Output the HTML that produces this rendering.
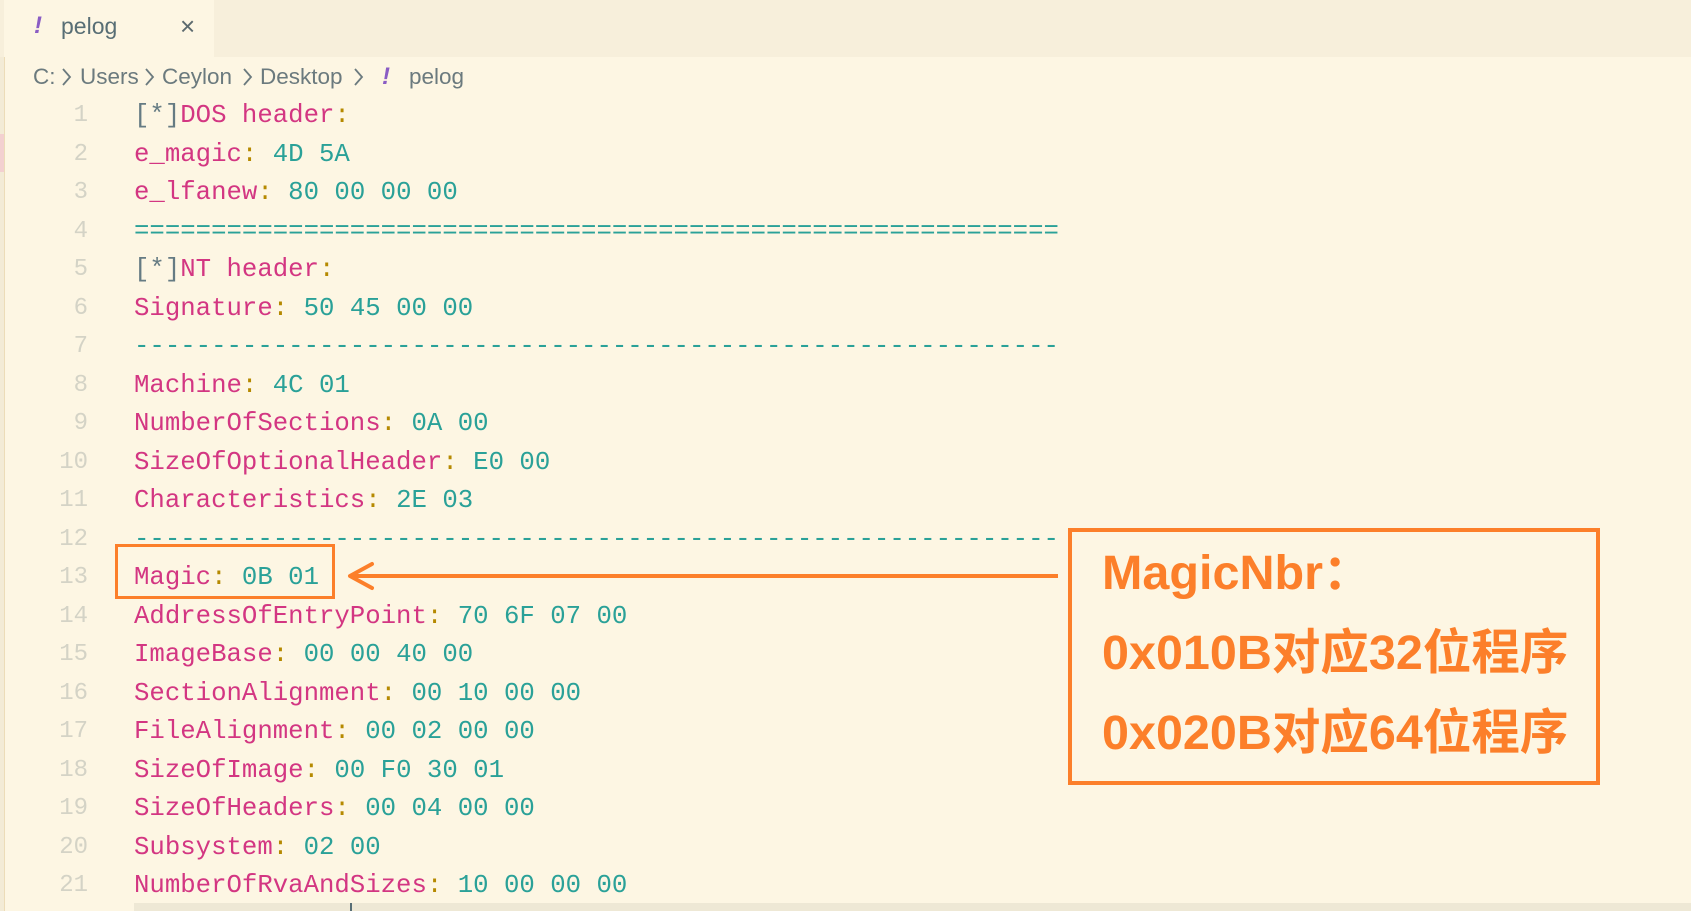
<!DOCTYPE html>
<html><head><meta charset="utf-8"><style>
*{margin:0;padding:0;box-sizing:border-box}
body{width:1691px;height:911px;background:#fdf6e3;position:relative;overflow:hidden;font-family:"Liberation Sans","Noto Sans CJK SC",sans-serif}
.tabbar{position:absolute;left:0;top:0;width:1691px;height:57px;background:#f7efdb}
.tab{position:absolute;left:4px;top:0;width:210px;height:57px;background:#fdf6e3}
.ex{position:absolute;color:#8a5cc4;font-style:italic;font-weight:bold;font-size:24px}
.sb{position:absolute;left:0;top:57px;width:5px;height:854px;border-right:1px solid #ecdcb8;background:#f3ebd6}
.t{position:absolute;color:#586e75;font-size:23px}
.bc{position:absolute;top:64px;color:#6b7a7e;font-size:22.5px;white-space:pre}
.ln{position:absolute;left:30px;width:58px;text-align:right;color:#d4d3c6;font-family:"Liberation Mono",monospace;font-size:24px}
.code{position:absolute;left:134px;font-family:"Liberation Mono",monospace;font-size:25.7px;white-space:pre;color:#d33682}
.c{color:#b58900}.v{color:#2aa198}.g{color:#657b83}
.note{position:absolute;left:1102px;color:#fc7f2a;font-weight:bold;font-size:48.5px;font-family:"Liberation Sans","Noto Sans CJK SC",sans-serif;white-space:nowrap}
</style></head><body>
<div class="tabbar"></div>
<div class="tab"></div>
<div class="ex" style="left:34px;top:12px">!</div>
<div class="t" style="left:61px;top:13px">pelog</div>
<div class="t" style="left:180px;top:11px;font-size:26px;color:#5c6a6e">×</div>
<div class="sb"></div>
<div style="position:absolute;left:0;top:134px;width:4px;height:38px;background:#f3d0d0"></div>
<div class="bc" style="left:33px">C:</div>
<div class="bc" style="left:80px">Users</div>
<div class="bc" style="left:162px">Ceylon</div>
<div class="bc" style="left:260px">Desktop</div>
<svg style="position:absolute;left:0;top:0" width="400" height="100">
<g fill="none" stroke="#6b7a7e" stroke-width="1.8">
<polyline points="63,69 70,77 63,85"/><polyline points="146,69 153,77 146,85"/><polyline points="244,69 251,77 244,85"/><polyline points="355,69 362,77 355,85"/>
</g></svg>
<div class="ex" style="left:382px;top:63px">!</div>
<div class="bc" style="left:409px">pelog</div>

<div id="g"></div>
<script>
const L=[
['<span class="g">[*]</span>DOS header<span class="c">:</span>'],
['e_magic<span class="c">:</span> <span class="v">4D 5A</span>'],
['e_lfanew<span class="c">:</span> <span class="v">80 00 00 00</span>'],
['<span class="v">'+'='.repeat(60)+'</span>'],
['<span class="g">[*]</span>NT header<span class="c">:</span>'],
['Signature<span class="c">:</span> <span class="v">50 45 00 00</span>'],
['<span class="v">'+'-'.repeat(60)+'</span>'],
['Machine<span class="c">:</span> <span class="v">4C 01</span>'],
['NumberOfSections<span class="c">:</span> <span class="v">0A 00</span>'],
['SizeOfOptionalHeader<span class="c">:</span> <span class="v">E0 00</span>'],
['Characteristics<span class="c">:</span> <span class="v">2E 03</span>'],
['<span class="v">'+'-'.repeat(60)+'</span>'],
['Magic<span class="c">:</span> <span class="v">0B 01</span>'],
['AddressOfEntryPoint<span class="c">:</span> <span class="v">70 6F 07 00</span>'],
['ImageBase<span class="c">:</span> <span class="v">00 00 40 00</span>'],
['SectionAlignment<span class="c">:</span> <span class="v">00 10 00 00</span>'],
['FileAlignment<span class="c">:</span> <span class="v">00 02 00 00</span>'],
['SizeOfImage<span class="c">:</span> <span class="v">00 F0 30 01</span>'],
['SizeOfHeaders<span class="c">:</span> <span class="v">00 04 00 00</span>'],
['Subsystem<span class="c">:</span> <span class="v">02 00</span>'],
['NumberOfRvaAndSizes<span class="c">:</span> <span class="v">10 00 00 00</span>']];
let h='';
L.forEach((l,i)=>{const y=117+i*38.5;
h+=`<div class="ln" style="top:${y-15}px">${i+1}</div><div class="code" style="top:${y-16}px">${l[0]}</div>`;});
document.getElementById('g').innerHTML=h;
</script>
<div style="position:absolute;left:134px;top:903px;width:1557px;height:8px;background:#eee8d5"></div>
<div style="position:absolute;left:350px;top:903px;width:2px;height:8px;background:#586e75"></div>

<div style="position:absolute;left:115px;top:544px;width:220px;height:55px;border:3px solid #fc7f2a"></div>
<svg style="position:absolute;left:0;top:0" width="1691" height="911">
<line x1="352" y1="576" x2="1058" y2="576" stroke="#fc7f2a" stroke-width="4"/>
<polyline points="372,564 350,576 372,588" fill="none" stroke="#fc7f2a" stroke-width="4" stroke-linecap="round" stroke-linejoin="round"/>
</svg>
<div style="position:absolute;left:1068px;top:528px;width:532px;height:257px;border:4px solid #fc7f2a"></div>
<div class="note" style="top:533px">MagicNbr：</div>
<div class="note" style="top:613px">0x010B对应32位程序</div>
<div class="note" style="top:693px">0x020B对应64位程序</div>
</body></html>
